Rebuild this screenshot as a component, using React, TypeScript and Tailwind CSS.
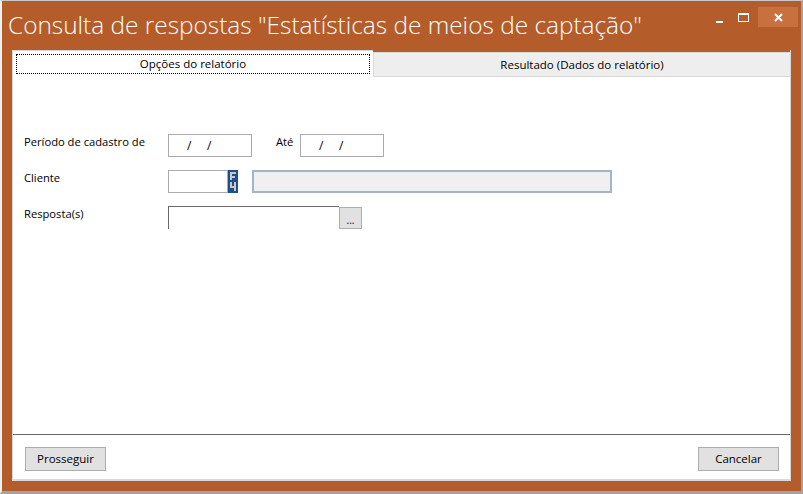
import React from "react";

const ui = { fontFamily: '"Open Sans", "Noto Sans", sans-serif' };

const F4Icon = () => (
  <svg width="10" height="23" viewBox="0 0 10 23" className="block shrink-0">
    <rect x="0" y="0" width="10" height="23" fill="#1d4f8c" />
    {/* F */}
    <rect x="2" y="2" width="6" height="2" fill="#c9c9c9" />
    <rect x="2" y="2" width="2" height="8" fill="#c9c9c9" />
    <rect x="2" y="6" width="5" height="2" fill="#c9c9c9" />
    {/* 4 */}
    <rect x="2" y="12" width="2" height="6" fill="#c9c9c9" />
    <rect x="2" y="16" width="6" height="2" fill="#c9c9c9" />
    <rect x="6" y="12" width="2" height="9" fill="#c9c9c9" />
  </svg>
);

const DateBox = ({ width }: { width: string }) => (
  <div
    className={`${width} h-[23px] border border-[#ababab] bg-white flex items-center text-[12px] text-black`}
  >
    <span className="pl-[18px] whitespace-pre">/     /</span>
  </div>
);

const WinButton = ({ label }: { label: string }) => (
  <button className="w-[81px] h-[24px] bg-[#e1e1e1] border border-[#adadad] text-[11.5px] text-black">
    {label}
  </button>
);

export default function App() {
  return (
    <div
      className="w-[803px] h-[494px] bg-[#b45d2b] border-t border-l-2 border-t-[#c9c9c9] border-l-[#f0f0f0] border-r-2 border-b-[3px] border-r-[#a3a3a3] border-b-[#a3a3a3] flex flex-col"
      style={ui}
    >
      {/* title bar */}
      <div className="h-[49px] flex items-start shrink-0">
        <div className="pl-[6px] pt-[7px] text-[24.4px] leading-[33px] text-white font-light whitespace-nowrap">
          Consulta de respostas "Estatísticas de meios de captação"
        </div>
        <div className="ml-auto flex items-start pt-[6px]">
          <div className="w-[22px] h-[20px] flex items-center justify-center mr-[2px]">
            <div className="w-[7px] h-[2px] bg-white mt-[9px]" />
          </div>
          <div className="w-[22px] h-[20px] flex items-center justify-center mr-[4px]">
            <div className="w-[11px] h-[9px] border border-white border-t-2" />
          </div>
          <div className="w-[40px] h-[20px] bg-[#c8703e] flex items-center justify-center mr-[3px]">
            <svg width="9" height="9" viewBox="0 0 9 9">
              <path d="M1 1 L8 8 M8 1 L1 8" stroke="white" strokeWidth="2" />
            </svg>
          </div>
        </div>
      </div>

      {/* content panel */}
      <div className="flex-1 flex flex-col mx-[10px] mb-[10px] border-l border-r border-b border-[#d6d6d6] border-b-[#dadada] border-b-2">
        {/* tabs */}
        <div className="flex h-[27px] shrink-0">
          <div className="w-[360px] bg-white border-t border-[#d6d6d6] pt-[3px] px-[3px] h-[27px]">
            <div className="h-[20px] border border-dotted border-black flex items-center justify-center text-[11.5px] text-black">
              Opções do relatório
            </div>
          </div>
          <div className="flex-1 mt-[2px] bg-[#eeeeee] border-t border-l border-b border-r border-[#d9d9d9] flex items-center justify-center text-[11.5px] text-black pt-[1px] -mr-px">
            Resultado (Dados do relatório)
          </div>
        </div>

        {/* body */}
        <div className="flex-1 bg-white pt-[57px] pl-[11px] text-[11.2px] text-black">
          <div className="flex flex-col gap-[13px]">
            <div className="flex items-start h-[23px]">
              <div className="w-[144px] leading-[16px]">Período de cadastro de</div>
              <DateBox width="w-[84px]" />
              <div className="w-[48px] pl-[24px] leading-[16px]">Até</div>
              <DateBox width="w-[84px]" />
            </div>
            <div className="flex items-start h-[23px]">
              <div className="w-[144px] leading-[16px]">Cliente</div>
              <div className="w-[60px] h-[23px] border border-[#ababab] bg-white" />
              <F4Icon />
              <div className="ml-[14px] w-[360px] h-[23px] border-2 border-[#a5b3c6] bg-[#f0f0f0]" />
            </div>
            <div className="flex items-start h-[23px]">
              <div className="w-[144px] leading-[16px]">Resposta(s)</div>
              <div className="w-[171px] h-[23px] border-t border-l border-[#6a6a6a] bg-white" />
              <div className="w-[23px] h-[22px] mt-px bg-[#e1e1e1] border border-[#adadad] flex items-end justify-center pb-[3px] text-[10px] leading-[10px]">
                ...
              </div>
            </div>
          </div>
        </div>

        {/* footer */}
        <div className="h-[45px] shrink-0 bg-white border-t border-[#696969] flex items-start justify-between pt-[12px] pl-[12px] pr-[11px]">
          <WinButton label="Prosseguir" />
          <WinButton label="Cancelar" />
        </div>
      </div>
    </div>
  );
}
